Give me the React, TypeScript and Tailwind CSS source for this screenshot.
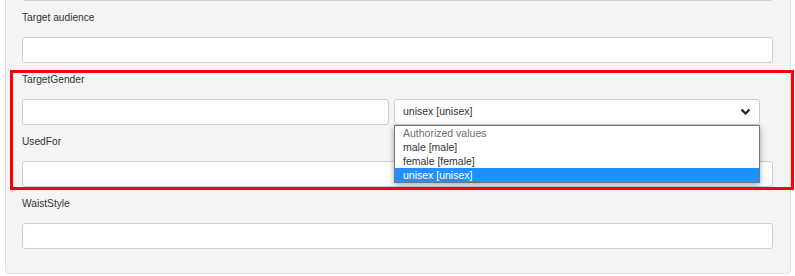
import type { ReactNode } from "react"

const FONT = "font-['Liberation_Sans',Arial,sans-serif]"

const OPTIONS = ["male [male]", "female [female]", "unisex [unisex]"]

function Field({ label, children }: { label: string; children: ReactNode }) {
  return (
    <div className="mt-[10px]">
      <div className="h-[14px] leading-[14px] text-[10.2px] text-[#333] mb-[12px]">{label}</div>
      {children}
    </div>
  )
}

function TextBox({ className = "" }: { className?: string }) {
  return <div className={`h-[26px] bg-white border border-[#cfcfcf] rounded-[3px] ${className}`} />
}

export default function App() {
  return (
    <div className={`relative w-[795px] h-[276px] bg-white overflow-hidden ${FONT}`}>
      <div className="ml-[5px] -mt-[30px] w-[786px] bg-[#f4f4f4] border border-[#e0e0e0] rounded-[4px] pl-[16px] pr-[17px] pt-[4px] pb-[24px]">
        <TextBox />

        <Field label="Target audience">
          <TextBox />
        </Field>

        <Field label="TargetGender">
          <div className="flex gap-[5px] w-[738px]">
            <TextBox className="w-[367px]" />
            <div className="relative w-[366px]">
              <div className="h-[26px] bg-white border border-[#cfcfcf] rounded-[3px] flex items-center justify-between pl-[8px] pr-[8px] text-[10.5px] text-[#333]">
                <span>unisex [unisex]</span>
                <svg width="11" height="8" viewBox="0 0 11 8">
                  <polyline points="1.5,1.5 5.5,5.5 9.5,1.5" fill="none" stroke="#222" strokeWidth="2.2" />
                </svg>
              </div>
              {/* open native listbox */}
              <div className="absolute left-0 top-full z-10 w-[366px] bg-white border border-[#767676] shadow-[0_2px_6px_rgba(0,0,0,0.35)] text-[10.5px]">
                <div className="h-[14px] leading-[14px] pl-[8px] text-[#6d6d6d]">Authorized values</div>
                {OPTIONS.map((o, i) => (
                  <div
                    key={o}
                    className={`h-[14px] leading-[14px] pl-[8px] ${
                      i === OPTIONS.length - 1 ? "bg-[#1e90ff] text-white" : "text-[#333]"
                    }`}
                  >
                    {o}
                  </div>
                ))}
              </div>
            </div>
          </div>
        </Field>

        <Field label="UsedFor">
          <TextBox />
        </Field>

        <Field label="WaistStyle">
          <TextBox />
        </Field>
      </div>

      {/* highlight annotation */}
      <div className="absolute left-[10px] top-[70px] w-[784px] h-[120px] border-[3px] border-[#ff0000] pointer-events-none z-20" />
    </div>
  )
}
